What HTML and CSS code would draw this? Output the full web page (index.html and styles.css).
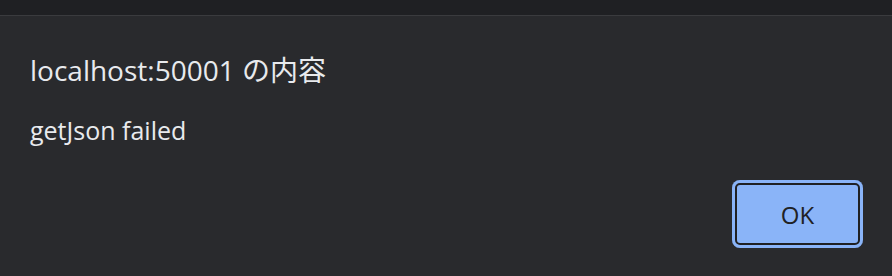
FILE: index.html
```html
<!DOCTYPE html>
<html>
<head>
<meta charset="utf-8">
<link rel="stylesheet" href="styles.css">
</head>
<body>
<div class="topbar"></div>
<div class="dialog">
  <div class="title">localhost:50001 の内容</div>
  <div class="message">getJson failed</div>
  <div class="actions">
    <button class="ok">OK</button>
  </div>
</div>
</body>
</html>
```
FILE: styles.css
```css
html, body {
  margin: 0;
  padding: 0;
  height: 100%;
  background: #292a2d;
  overflow: hidden;
}
body {
  font-family: "Open Sans", "Noto Sans CJK JP", sans-serif;
  color: #e8eaed;
}
.topbar {
  height: 15px;
  background: #1f2023;
  border-bottom: 1px solid #3a3b3e;
}
.dialog {
  padding: 0 29px 0 30px;
  display: flex;
  flex-direction: column;
}
.title {
  margin-top: 35px;
  font-size: 28px;
  line-height: 38px;
}
.message {
  margin-top: 24px;
  font-size: 25px;
  line-height: 34px;
}
.actions {
  display: flex;
  justify-content: flex-end;
  margin-top: 33px;
}
.ok {
  width: 131px;
  height: 68px;
  border: none;
  border-radius: 8px;
  background: #8ab4f8;
  box-shadow: inset 0 0 0 3px #8ab4f8, inset 0 0 0 5px #202124;
  color: #202124;
  font-family: "Open Sans", sans-serif;
  font-size: 24px;
  padding: 0;
}
```
